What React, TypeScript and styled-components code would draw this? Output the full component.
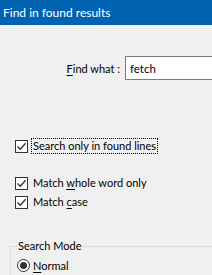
import React from "react";
import styled, { createGlobalStyle } from "styled-components";

const GlobalStyle = createGlobalStyle`
  html, body {
    margin: 0;
    padding: 0;
    background: #f0f0f0;
    overflow: hidden;
  }
  body {
    font-family: Lato, "Noto Sans", sans-serif;
    font-size: 11px;
    color: #000;
  }
`;

const Dialog = styled.div`
  width: 212px;
  height: 275px;
  background: #f0f0f0;
  overflow: hidden;
`;

const TitleBar = styled.div`
  box-sizing: border-box;
  height: 25px;
  padding-left: 3px;
  background: #0063b1;
  color: #fff;
  display: flex;
  align-items: center;
  font-size: 12px;
  white-space: nowrap;
`;

const FindRow = styled.div`
  display: flex;
  align-items: center;
  margin-top: 31px;
  height: 24px;
  white-space: nowrap;
`;

const FindLabel = styled.span`
  flex: none;
  width: 120px;
  text-align: right;
  margin-right: 5px;
`;

const FindInput = styled.div`
  box-sizing: border-box;
  flex: none;
  width: 140px;
  height: 24px;
  padding-left: 4px;
  border: 1px solid #7a7a7a;
  background: #fff;
  display: flex;
  align-items: center;
  font-size: 11.5px;
`;

const Key = styled.span`
  text-decoration: underline;
  text-underline-offset: 2px;
`;

const CheckRow = styled.div<{ $top: number }>`
  display: flex;
  align-items: center;
  height: 16px;
  margin-top: ${(p) => p.$top}px;
  padding-left: 15px;
  white-space: nowrap;
`;

const Box = styled.span`
  box-sizing: border-box;
  width: 13px;
  height: 13px;
  border: 1px solid #333;
  background: #fff;
  display: flex;
  align-items: center;
  justify-content: center;
  margin-right: 3px;
  flex: none;
`;

const Label = styled.span<{ $focus?: boolean }>`
  padding: 0 1px;
  border: 1px ${(p) => (p.$focus ? "dotted #000" : "solid transparent")};
  line-height: 14px;
`;

const Group = styled.fieldset`
  margin: 28px 0 0 10px;
  padding: 0 0 0 6px;
  border: 1px solid #dcdcdc;
  border-right: none;
  border-bottom: none;
  height: 60px;
`;

const Legend = styled.legend`
  padding: 0 1px;
  line-height: 16px;
`;

const RadioRow = styled.div`
  display: flex;
  align-items: center;
  margin-top: 3px;
  height: 16px;
  white-space: nowrap;
`;

const Radio = styled.span`
  box-sizing: border-box;
  width: 13px;
  height: 13px;
  border: 1px solid #333;
  border-radius: 50%;
  background: #fff;
  display: flex;
  align-items: center;
  justify-content: center;
  margin-right: 3px;
  flex: none;

  &::after {
    content: "";
    width: 7px;
    height: 7px;
    border-radius: 50%;
    background: #333;
  }
`;

const Check = () => (
  <svg width="11" height="11" viewBox="0 0 11 11">
    <path d="M1.5 5.5 L4.3 8.3 L9.6 2.2" fill="none" stroke="#333" strokeWidth="1.3" />
  </svg>
);

const App = () => {
  return (
    <Dialog>
      <GlobalStyle />
      <TitleBar>Find in found results</TitleBar>
      <FindRow>
        <FindLabel>
          <Key>F</Key>ind what :
        </FindLabel>
        <FindInput>fetch</FindInput>
      </FindRow>
      <CheckRow $top={58}>
        <Box><Check /></Box>
        <Label $focus>Search only in found lines</Label>
      </CheckRow>
      <CheckRow $top={21}>
        <Box><Check /></Box>
        <Label>Match <Key>w</Key>hole word only</Label>
      </CheckRow>
      <CheckRow $top={3}>
        <Box><Check /></Box>
        <Label>Match <Key>c</Key>ase</Label>
      </CheckRow>
      <Group>
        <Legend>Search Mode</Legend>
        <RadioRow>
          <Radio />
          <span><Key>N</Key>ormal</span>
        </RadioRow>
      </Group>
    </Dialog>
  );
};

export default App;
